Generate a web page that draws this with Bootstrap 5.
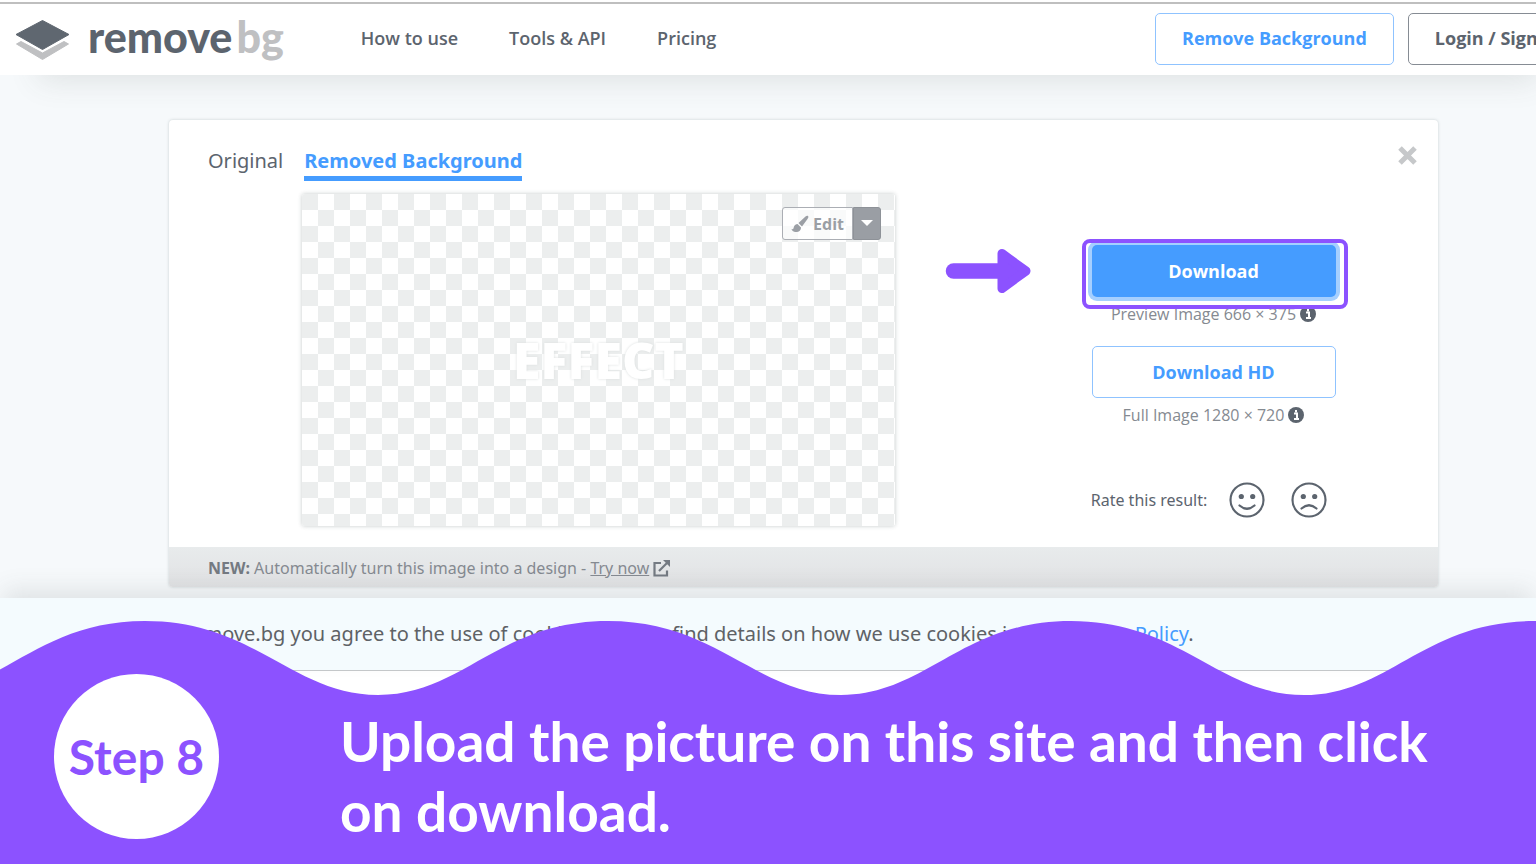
<!DOCTYPE html>
<html lang="en">
<head>
<meta charset="utf-8">
<meta name="viewport" content="width=device-width, initial-scale=1">
<title>remove.bg – Step 8</title>
<link href="https://cdn.jsdelivr.net/npm/bootstrap@5.3.0/dist/css/bootstrap.min.css" rel="stylesheet">
<style>
  :root { --ink: #5c646e; --blue: #459cff; --violet: #8c52ff; }
  body { font-family: "Open Sans", "Noto Sans", sans-serif; color: var(--ink); background: #fff; }
  .stage { min-height: 100vh; }
  .topbar { height: 75px; padding: 2px 0 0 15px; background: #fff; z-index: 2;
    box-shadow: inset 0 2px 0 #fff, inset 0 4px 0 #bfbfbf, 20px 24px 30px -18px rgba(70, 75, 70, .13); }
  .brand-mark { width: 55px; height: 42px; margin-top: 3px; }
  .brand-name { font-family: Lato, sans-serif; font-weight: 900; font-size: 43px; line-height: 48px; color: var(--ink); margin: -4px 0 0 18px; }
  .brand-name span { color: #bfc0c2; margin-left: 4px; }
  .main-links { gap: 51px; margin-left: 77px; font-size: 18px; font-weight: 600; }
  .main-links a { color: var(--ink); text-decoration: none; white-space: nowrap; }
  .actions { width: 381px; gap: 14px; }
  .pill { height: 52px; border-radius: 5px; font-size: 18px; font-weight: 700; padding: 0 26px; flex: none; white-space: nowrap; }
  .pill-blue { color: var(--blue); border: 1px solid #8fc3ff; background: #fff; }
  .pill-ink { color: var(--ink); border: 1px solid #868c94; background: #fff; }
  .work { background: #f6f9fb; padding: 45px 98px 11px 169px; }
  .result { border: 0; border-radius: 4px; box-shadow: 0 0 3px rgba(60, 80, 80, .25); }
  .result-body { padding: 26px 39px 21px; }
  .tabs { gap: 21px; font-size: 20px; line-height: 30px; }
  .tabs, .rate, .promo, .cookies { font-family: "Noto Sans", "Open Sans", sans-serif; }
  .tabs a { color: var(--ink); text-decoration: none; border-bottom: 5px solid transparent; }
  .tabs a.on { color: var(--blue); font-weight: 700; border-color: var(--blue); }
  .close-x { top: 25px; right: 20px; width: 21px; height: 21px; }
  .outcome { margin-top: 13px; }
  .preview { flex: 0 1 593px; height: 332px; margin-left: 94px; border-radius: 3px;
    background: repeating-conic-gradient(#fff 0 25%, #eceeee 0 50%) 0 0 / 32px 32px; box-shadow: 0 0 4px rgba(60, 80, 80, .3); }
  .effect { font-size: 50px; font-weight: 800; line-height: 56px; color: #fff; text-shadow: 0 0 3px #d9dddd; }
  .edit { top: 13px; right: 14px; height: 33px; }
  .edit button { border: 1px solid #abaeb4; background: rgba(255, 255, 255, .7); color: #9b9fa5; font-size: 16px; font-weight: 700; line-height: 20px; padding: 0 8px; }
  .edit button:first-child { border-radius: 3px 0 0 3px; }
  .edit button:last-child { border-radius: 0 3px 3px 0; background: #9a9ea4; border-color: #8e9298; padding: 0 7px; }
  .arrow { width: 86px; height: 46px; margin: 54px 0 0 50px; flex: none; }
  .side { padding: 51px 3px 0 0; }
  .side .wide { width: 244px; }
  .download { background: var(--blue); color: #fff; border: 0; box-shadow: 0 0 0 4px #a5cfff; }
  .callout { top: -6px; left: -10px; right: -12px; bottom: -12px; border: 4px solid var(--violet); border-radius: 8px; }
  .note { font-size: 16px; line-height: 24px; color: #858a91; margin: 5px 0 20px; }
  .rate { font-size: 16px; gap: 22px; margin: 55px 9px 0 0; }
  .rate button { border: 0; background: none; padding: 0; width: 36px; height: 36px; }
  .rate button + button { margin-left: 4px; }
  .promo { height: 40px; padding: 2px 0 0 39px; font-size: 16px; color: #858a91; background: linear-gradient(#e8ebec, #e1e2e4); border-radius: 0 0 4px 4px; }
  .promo strong { color: #747a82; }
  .promo a { color: #858a91; }
  .cookies { height: 73px; padding-left: 99px; font-size: 20px; background: #f4fbfe; border-bottom: 1px solid #c4c7c9; color: #5e6266; position: relative;
    box-shadow: 0 -12px 24px -4px rgba(70, 75, 75, .13); }
  .cookies a { color: var(--blue); text-decoration: none; }
  .cookies .dismiss { color: #5e6266; border: 0; background: none; margin-right: 20px; padding: 0; font-size: 40px; line-height: 40px; }
  .banner { height: 243px; z-index: 3; color: #fff; font-family: Lato, sans-serif; font-weight: 700; }
  .banner svg { inset: 0; width: 100%; height: 100%; }
  .step { width: 165px; height: 165px; margin: 53px 0 0 54px; background: #fff; color: var(--violet); font-size: 48px; flex: none; }
  .tell { font-size: 55px; line-height: 70px; margin: 85px 90px 0 121px; }
</style>
</head>
<body>
<div class="stage position-relative overflow-hidden">
  <header class="topbar d-flex align-items-center position-relative">
    <a href="#" class="d-flex align-items-center text-decoration-none" aria-label="remove.bg">
      <svg class="brand-mark" viewBox="0 0 55 42"><path d="M1.500 25 6 22.500 27.500 34 49 22.500 53.500 25 27.500 40.500Z" fill="#bfc0c2" stroke="#bfc0c2" stroke-width="1" stroke-linejoin="round"/><path d="M27.500 1.500 54 15.500 27.500 30.500 1 15.500Z" fill="#5f6770" stroke="#5f6770" stroke-linejoin="round"/></svg>
      <span class="brand-name">remove<span>bg</span></span>
    </a>
    <nav class="main-links d-flex"><a href="#">How to use</a><a href="#">Tools &amp; API</a><a href="#">Pricing</a></nav>
    <div class="actions d-flex ms-auto">
      <button class="pill pill-blue" type="button">Remove Background</button>
      <button class="pill pill-ink" type="button">Login / Sign up</button>
    </div>
  </header>

  <main class="work">
    <section class="result card">
      <div class="result-body card-body">
        <nav class="tabs d-flex"><a href="#">Original</a><a href="#" class="on">Removed Background</a></nav>
        <button type="button" class="close-x position-absolute border-0 bg-transparent p-0 d-flex" aria-label="Close">
          <svg viewBox="0 0 21 21" width="21" height="21"><path d="M3 3 18 18M18 3 3 18" stroke="#c6c8ca" stroke-width="5"/></svg>
        </button>
        <div class="outcome d-flex">
          <div class="preview position-relative d-flex align-items-center justify-content-center">
            <span class="effect">EFFECT</span>
            <div class="edit position-absolute d-flex">
              <button type="button" class="d-flex align-items-center gap-1"><svg width="18" height="18" viewBox="0 0 18 18" fill="#9b9fa5"><path d="M17 1c1 1 0 2-.5 3L11 11.500 7.500 8 14.500 1.500C15.500.6 16.400.4 17 1ZM6.500 9 10 12.500C10 16 7 17.500 4 17 2 16.700 1 15.500.5 14c2 .5 2-.5 2.500-2.500C3.500 10 5 9 6.500 9Z"/></svg>Edit</button>
              <button type="button" aria-label="More edit options" class="d-flex align-items-center"><svg width="12" height="7" viewBox="0 0 12 7"><path d="M0 0h12L6 6Z" fill="#fff"/></svg></button>
            </div>
          </div>
          <svg class="arrow" viewBox="0 0 86 46"><path d="M8.500 23H60" stroke="#8c52ff" stroke-width="15.500" stroke-linecap="round"/><path d="M57 5.500 81 23 57 40.500Z" fill="#8c52ff" stroke="#8c52ff" stroke-width="9" stroke-linejoin="round"/></svg>
          <div class="side flex-grow-1 d-flex flex-column align-items-center">
            <div class="position-relative">
              <button type="button" class="pill download wide">Download</button>
              <div class="callout position-absolute"></div>
            </div>
            <p class="note d-flex align-items-center gap-1">Preview Image 666 × 375 <svg width="16" height="16" viewBox="0 0 16 16"><circle cx="8" cy="8" r="8" fill="#5c646e"/><path d="M6 6.500h3v5M6 12h5M8 3v2.200" stroke="#fff" stroke-width="2" fill="none"/></svg></p>
            <button type="button" class="pill pill-blue wide">Download HD</button>
            <p class="note d-flex align-items-center gap-1 mb-0">Full Image 1280 × 720 <svg width="16" height="16" viewBox="0 0 16 16"><circle cx="8" cy="8" r="8" fill="#5c646e"/><path d="M6 6.500h3v5M6 12h5M8 3v2.200" stroke="#fff" stroke-width="2" fill="none"/></svg></p>
            <div class="rate d-flex align-items-center"><span>Rate this result:</span>
              <button type="button" aria-label="Good"><svg class="d-block" width="36" height="36" viewBox="0 0 36 36" fill="none" stroke="#5c646e" stroke-width="2.200" stroke-linecap="round"><circle cx="18" cy="18" r="16.500"/><path d="M10.500 23.500Q18 30 25.500 23.500"/><g fill="#5c646e" stroke="none"><circle cx="12.300" cy="14.500" r="2.600"/><circle cx="23.700" cy="14.500" r="2.600"/></g></svg></button>
              <button type="button" aria-label="Bad"><svg class="d-block" width="36" height="36" viewBox="0 0 36 36" fill="none" stroke="#5c646e" stroke-width="2.200" stroke-linecap="round"><circle cx="18" cy="18" r="16.500"/><path d="M10.500 26.500Q18 20 25.500 26.500"/><g fill="#5c646e" stroke="none"><circle cx="12.300" cy="14.500" r="2.600"/><circle cx="23.700" cy="14.500" r="2.600"/></g></svg></button>
            </div>
          </div>
        </div>
      </div>
      <div class="promo d-flex align-items-center gap-1"><span><strong>NEW:</strong> Automatically turn this image into a design - <a href="#">Try now</a></span>
        <svg width="17" height="17" viewBox="0 0 17 17" fill="none" stroke="#747a82" stroke-width="2.200"><path d="M8 3H1.500V15.500H14V10.500M6 11 14 3"/><path d="M10 0H17V7Z" fill="#747a82" stroke="none"/></svg>
      </div>
    </section>
  </main>

  <div class="cookies d-flex align-items-center justify-content-between">
    <span>By using remove.bg you agree to the use of cookies. You can find details on how we use cookies in our <a href="#">Privacy Policy</a>.</span>
    <button type="button" class="dismiss" aria-label="Dismiss">×</button>
  </div>

  <section class="banner position-absolute bottom-0 start-0 w-100 d-flex">
    <svg class="position-absolute" viewBox="0 0 1536 243" preserveAspectRatio="none"><path fill="#8c52ff" d="M-85 74C0 74 35 0 145 0S293 74 378 74 498 0 608 0 756 74 841 74 961 0 1071 0 1219 74 1304 74 1424 0 1534 0H1536V243H-85Z"/></svg>
    <div class="step rounded-circle d-flex align-items-center justify-content-center position-relative">Step 8</div>
    <p class="tell position-relative">Upload the picture on this site and then click on download.</p>
  </section>
</div>
<script src="https://cdn.jsdelivr.net/npm/bootstrap@5.3.0/dist/js/bootstrap.bundle.min.js"></script>
</body>
</html>
